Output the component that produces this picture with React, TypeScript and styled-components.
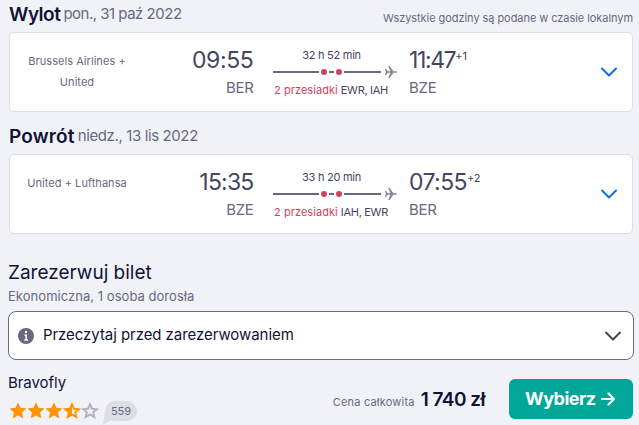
import React from 'react';
import styled, { createGlobalStyle } from 'styled-components';

const Global = createGlobalStyle`
  * { box-sizing: border-box; }
  body { margin: 0; background: #f1f2f8; font-family: Inter, sans-serif; color: #111236; overflow: hidden; }
`;

const Page = styled.main`
  width: 639px;
  height: 425px;
  padding: 0 6px 0 9px;
  overflow: hidden;
`;

const LegHeader = styled.header<{ $first?: boolean }>`
  display: flex;
  align-items: flex-start;
  height: ${(p) => (p.$first ? 32 : 42)}px;
  padding-top: ${(p) => (p.$first ? 3 : 13)}px;
  line-height: 24px;
  white-space: nowrap;
`;

const LegTitle = styled.h2<{ $tracking: number }>`
  margin: 0 3px 0 0;
  font-size: 19px;
  font-weight: 600;
  letter-spacing: ${(p) => p.$tracking}px;
`;

const LegDate = styled.span<{ $tracking: number }>`
  font-size: 15px;
  line-height: 21px;
  letter-spacing: ${(p) => p.$tracking}px;
  color: #68697f;
`;

const LocalNote = styled.span`
  margin-left: auto;
  padding-top: 3px;
  font-size: 11px;
  letter-spacing: -0.06px;
  color: #68697f;
`;

const LegCard = styled.section`
  display: grid;
  grid-template-columns: 135px 109px 19px 124px 12px 1fr 24px;
  height: 80px;
  padding-right: 11px;
  margin-right: -1px;
  width: 624px;
  background: #fff;
  border: 1px solid #dddde5;
  border-radius: 5px;
  white-space: nowrap;
`;

const Carrier = styled.div`
  padding: 18px 1px 0 0;
  text-align: center;
  white-space: normal;
  font-size: 11px;
  line-height: 21px;
  letter-spacing: 0.05px;
  color: #68697f;
  span { display: block; }
`;

const Stop = styled.div<{ $end?: boolean }>`
  padding-top: 13px;
  padding-right: ${(p) => (p.$end ? 0.5 : 0)}px;
  text-align: ${(p) => (p.$end ? 'right' : 'left')};
`;

const Time = styled.div<{ $tracking: number; $end?: boolean }>`
  display: flex;
  justify-content: ${(p) => (p.$end ? 'flex-end' : 'flex-start')};
  font-size: 23px;
  line-height: 28px;
  letter-spacing: ${(p) => p.$tracking}px;
  color: #444560;
`;

const DayShift = styled.sup`
  font-size: 11px;
  line-height: 21px;
  letter-spacing: 0;
`;

const Airport = styled.div`
  padding-top: 1px;
  font-size: 15px;
  line-height: 26px;
  letter-spacing: -0.3px;
  color: #68697f;
`;

const Route = styled.div`
  padding-top: 13px;
  font-size: 11px;
  line-height: 18px;
  color: #444560;
`;

const Duration = styled.div`
  width: 117px;
  text-align: center;
  letter-spacing: -0.25px;
`;

const RouteLine = styled.svg`
  display: block;
  width: 124px;
  height: 16px;
`;

const Stops = styled.div`
  display: flex;
  gap: 3px;
  padding: 1px 0 0 1px;
  letter-spacing: -0.3px;
`;

const StopCount = styled.span`
  letter-spacing: 0.06px;
  color: #d1435b;
`;

const ChevronIcon = styled.svg<{ $color: string }>`
  align-self: center;
  flex: none;
  width: 24px;
  height: 24px;
  fill: none;
  stroke: ${(p) => p.$color};
  stroke-width: 2;
  stroke-linecap: round;
  stroke-linejoin: round;
`;

const Booking = styled.section`
  padding-top: 27px;
`;

const BookingTitle = styled.h3`
  margin: 0 0 0 -1px;
  font-size: 19px;
  font-weight: 400;
  line-height: 24px;
  letter-spacing: 0;
`;

const BookingMeta = styled.p`
  margin: 0 0 0 -1px;
  padding-top: 1px;
  font-size: 13px;
  line-height: 20px;
  letter-spacing: 0.04px;
  color: #68697f;
`;

const Notice = styled.button`
  display: flex;
  align-items: center;
  width: 626px;
  height: 49px;
  margin: 5px 0 0 -1px;
  padding: 0 8px 0 9px;
  background: #fff;
  border: 1px solid #68697f;
  border-radius: 8px;
  font: inherit;
  font-size: 15px;
  letter-spacing: -0.06px;
  color: #111236;
  svg:last-child { margin-left: auto; }
`;

const NoticeText = styled.span`
  padding-bottom: 2px;
`;

const InfoIcon = styled.svg`
  width: 16px;
  height: 16px;
  margin-right: 9px;
`;

const Offer = styled.div`
  display: flex;
  padding-top: 13px;
`;

const Agent = styled.div`
  flex: 1;
  font-size: 15px;
  line-height: 20px;
  letter-spacing: -0.05px;
`;

const AgentName = styled.div`
  margin-left: -1px;
`;

const Rating = styled.div`
  display: flex;
  align-items: flex-start;
  padding-top: 8px;
`;

const Stars = styled.svg`
  width: 90px;
  height: 18px;
`;

const ReviewBubble = styled.span`
  position: relative;
  width: 32px;
  height: 20px;
  margin-left: 6px;
  border-radius: 10px;
  background: #dddde5;
  text-align: center;
  font-size: 11px;
  line-height: 20px;
  letter-spacing: 0;
  color: #68697f;
  &::before {
    content: '';
    position: absolute;
    left: -2px;
    top: 10px;
    width: 12px;
    height: 14px;
    background: #dddde5;
    clip-path: polygon(17% 0, 100% 70%, 55% 72%, 0 100%);
  }
`;

const Price = styled.div`
  display: flex;
  align-items: baseline;
  padding-top: 3px;
  margin-right: 24px;
  white-space: nowrap;
`;

const PriceLabel = styled.span`
  margin-right: 6px;
  font-size: 11px;
  letter-spacing: 0.2px;
  color: #68697f;
`;

const Amount = styled.strong`
  font-size: 19px;
  font-weight: 600;
  line-height: 48px;
  letter-spacing: -0.5px;
`;

const SelectButton = styled.button`
  display: flex;
  align-items: center;
  width: 124px;
  height: 40px;
  margin-top: 6px;
  padding: 0 0 0 16px;
  border: 0;
  border-radius: 6px;
  background: #00a698;
  color: #fff;
  font: inherit;
  font-size: 18px;
  font-weight: 700;
  letter-spacing: -0.5px;
  svg { margin-left: 4px; }
`;

const SelectLabel = styled.span`
  padding-bottom: 2px;
`;

const Chevron = ({ color }: { color: string }) => (
  <ChevronIcon $color={color} viewBox="0 0 24 24">
    <path d="M5 8.500l7 7 7-7" />
  </ChevronIcon>
);

const STAR = 'M9 1.3l2.2 5 5.4.5-4.1 3.6 1.2 5.3L9 12.9l-4.7 2.8 1.2-5.3L1.400 6.800l5.400-.5z';
const STAR_OUTLINE = 'M9 2.400l2 4.300 4.800.5-3.600 3.100 1.100 4.700L9 12.500l-4.300 2.500 1.100-4.700L2.200 7.200 7 6.700z';

type LegData = {
  carrier: string[];
  depart: string;
  departTracking: number;
  from: string;
  duration: string;
  via: string;
  arrive: string;
  arriveTracking: number;
  shift: string;
  to: string;
};

const Leg = ({ leg }: { leg: LegData }) => (
  <LegCard>
    <Carrier>{leg.carrier.map((c) => <span key={c}>{c}</span>)}</Carrier>
    <Stop $end>
      <Time $end $tracking={leg.departTracking}>{leg.depart}</Time>
      <Airport>{leg.from}</Airport>
    </Stop>
    <span />
    <Route>
      <Duration>{leg.duration}</Duration>
      <RouteLine viewBox="0 0 124 16">
        <path d="M0 8h46M56 8h5M71 8h37" stroke="#68697f" strokeWidth="2" />
        <circle cx="51" cy="8" r="3" fill="#d1435b" />
        <circle cx="66" cy="8" r="3" fill="#d1435b" />
        <path
          d="M112 5h1.200l1.600 2.200h2.500L115.200 2h1.500l3.700 5.200h2.700q1 .2 1 .8t-1 .8h-2.700L116.700 14h-1.500l2.100-5.200h-2.500L113.200 11H112l.8-3z"
          fill="#8b8799"
        />
      </RouteLine>
      <Stops><StopCount>2 przesiadki</StopCount><span>{leg.via}</span></Stops>
    </Route>
    <span />
    <Stop>
      <Time $tracking={leg.arriveTracking}>{leg.arrive}<DayShift>{leg.shift}</DayShift></Time>
      <Airport>{leg.to}</Airport>
    </Stop>
    <Chevron color="#0770e3" />
  </LegCard>
);

const OUTBOUND: LegData = {
  carrier: ['Brussels Airlines +', 'United'], depart: '09:55', departTracking: -0.35, from: 'BER',
  duration: '32 h 52 min', via: 'EWR, IAH', arrive: '11:47', arriveTracking: -1.4, shift: '+1', to: 'BZE',
};
const INBOUND: LegData = {
  carrier: ['United + Lufthansa'], depart: '15:35', departTracking: -0.8, from: 'BZE',
  duration: '33 h 20 min', via: 'IAH, EWR', arrive: '07:55', arriveTracking: -0.6, shift: '+2', to: 'BER',
};

export default function App() {
  return (
    <Page>
      <Global />
      <LegHeader $first>
        <LegTitle $tracking={-0.5}>Wylot</LegTitle>
        <LegDate $tracking={-0.5}>pon., 31 paź 2022</LegDate>
        <LocalNote>Wszystkie godziny są podane w czasie lokalnym</LocalNote>
      </LegHeader>
      <Leg leg={OUTBOUND} />
      <LegHeader>
        <LegTitle $tracking={0.15}>Powrót</LegTitle>
        <LegDate $tracking={-0.38}>niedz., 13 lis 2022</LegDate>
      </LegHeader>
      <Leg leg={INBOUND} />
      <Booking>
        <BookingTitle>Zarezerwuj bilet</BookingTitle>
        <BookingMeta>Ekonomiczna, 1 osoba dorosła</BookingMeta>
        <Notice>
          <InfoIcon viewBox="0 0 16 16">
            <circle cx="8" cy="8" r="8" fill="#68697f" />
            <circle cx="8" cy="4" r="1.200" fill="#fff" />
            <path d="M6.500 7.200h1.700v4.600M6.300 12h3.700" stroke="#fff" strokeWidth="1.600" fill="none" />
          </InfoIcon>
          <NoticeText>Przeczytaj przed zarezerwowaniem</NoticeText>
          <Chevron color="#444560" />
        </Notice>
      </Booking>
      <Offer>
        <Agent>
          <AgentName>Bravofly</AgentName>
          <Rating>
            <Stars viewBox="0 0 90 18">
              {[0, 18, 36].map((x) => (
                <path key={x} d={STAR} transform={`translate(${x} 1)`} fill="#ff9400" stroke="#ff9400" strokeLinejoin="round" />
              ))}
              <path d={STAR_OUTLINE} transform="translate(54 1)" fill="none" stroke="#ff9400" strokeWidth="2" />
              <path d="M9 1.300v11.600l-4.700 2.800 1.200-5.300L1.400 6.800l5.400-.5z" transform="translate(54 1)" fill="#ff9400" />
              <path d={STAR_OUTLINE} transform="translate(72 1)" fill="none" stroke="#b2b2bf" strokeWidth="2" />
            </Stars>
            <ReviewBubble>559</ReviewBubble>
          </Rating>
        </Agent>
        <Price>
          <PriceLabel>Cena całkowita</PriceLabel>
          <Amount>1 740 zł</Amount>
        </Price>
        <SelectButton>
          <SelectLabel>Wybierz</SelectLabel>
          <svg width="16" height="16" viewBox="0 0 16 16" fill="none" stroke="#fff" strokeWidth="2.200" strokeLinecap="round" strokeLinejoin="round">
            <path d="M2 8h12M8.500 2.500L14 8l-5.500 5.500" />
          </svg>
        </SelectButton>
      </Offer>
    </Page>
  );
}
